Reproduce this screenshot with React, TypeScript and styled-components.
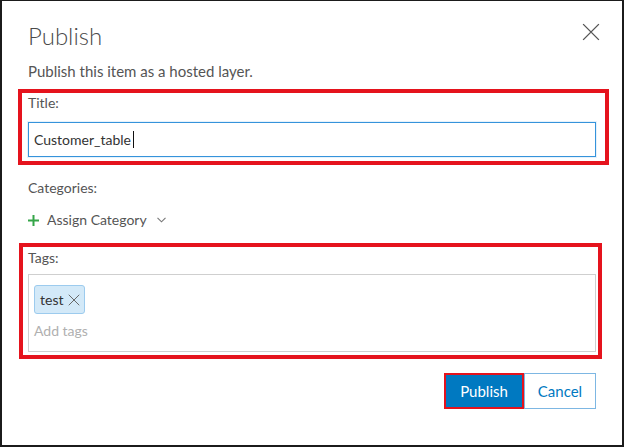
import React from 'react';
import styled, { createGlobalStyle } from 'styled-components';

const GlobalStyle = createGlobalStyle`
  html, body {
    margin: 0;
    padding: 0;
    background: #ffffff;
  }
  body {
    font-family: Lato, "Open Sans", "Liberation Sans", sans-serif;
    color: #4a4a4a;
  }
`;

// Outer frame of the screenshot
const Frame = styled.div`
  box-sizing: border-box;
  width: 624px;
  height: 447px;
  border: 2px solid #1b1b1b;
  border-top-width: 1px;
  background: #fff;
  padding: 20px 26px 0 26px;
  display: flex;
  flex-direction: column;
`;

const Header = styled.div`
  display: flex;
  align-items: flex-start;
  justify-content: space-between;
`;

const Heading = styled.h2`
  margin: 0;
  font-size: 24px;
  line-height: 30px;
  font-weight: 300;
  color: #4a4a4a;
`;

const CloseButton = styled.button`
  margin: 2px -4px 0 0;
  padding: 0;
  border: none;
  background: transparent;
  cursor: pointer;
  width: 18px;
  height: 18px;
  display: flex;
  color: #555;
`;

const Description = styled.p`
  margin: 10px 0 8px;
  font-size: 15px;
  line-height: 20px;
  color: #555;
`;

// red annotation frame drawn round a field
const Highlight = styled.div<{ $left: number; $right: number; $padLeft: number; $padRight: number; $padTop: number; $padBottom: number }>`
  border: 4px solid #e5131d;
  margin-left: ${p => -p.$left}px;
  margin-right: ${p => -p.$right}px;
  padding: ${p => p.$padTop}px ${p => p.$padRight}px ${p => p.$padBottom}px ${p => p.$padLeft}px;
`;

const Label = styled.div<{ $gap: number }>`
  font-size: 14px;
  line-height: 18px;
  color: #555;
  margin-bottom: ${p => p.$gap}px;
`;

const TextBox = styled.div`
  box-sizing: border-box;
  height: 35px;
  border: 1px solid #3593db;
  box-shadow: 0 0 0 1px rgba(53, 147, 219, 0.12);
  padding: 0 5px;
  display: flex;
  align-items: center;
  font-size: 14px;
  color: #333;
`;

const Caret = styled.span`
  display: inline-block;
  width: 1px;
  height: 17px;
  background: #111;
  margin-left: 2px;
`;

const Section = styled.div<{ $top: number }>`
  margin-top: ${p => p.$top}px;
`;

const AssignButton = styled.button`
  margin-top: 14px;
  padding: 0;
  border: none;
  background: transparent;
  font-family: inherit;
  font-size: 14px;
  line-height: 18px;
  color: #555;
  display: flex;
  align-items: center;
  gap: 8px;
  cursor: pointer;
`;

const TagBox = styled.div`
  box-sizing: border-box;
  height: 78px;
  border: 1px solid #cfcfcf;
  padding: 10px 5px 0;
  display: flex;
  flex-direction: column;
  align-items: flex-start;
`;

const Chip = styled.span`
  box-sizing: border-box;
  height: 29px;
  display: inline-flex;
  align-items: center;
  gap: 5px;
  padding: 0 4px 0 5px;
  background: #d3e9f8;
  border: 1px solid #9ccbee;
  border-radius: 3px;
  font-size: 14px;
  color: #333;
`;

const ChipRemove = styled.span`
  display: flex;
  color: #666;
`;

const Placeholder = styled.div`
  margin-top: 8px;
  font-size: 14px;
  line-height: 18px;
  color: #b0b0b0;
`;

const Actions = styled.div`
  margin-top: 14px;
  display: flex;
  justify-content: flex-end;
`;

const Marked = styled.div`
  border: 2px solid #e5131d;
  display: flex;
`;

const Button = styled.button<{ $primary?: boolean }>`
  box-sizing: border-box;
  font-family: inherit;
  font-size: 15px;
  cursor: pointer;
  padding: 0;
  ${p => p.$primary
    ? `
      width: 76px;
      height: 32px;
      background: #0079c1;
      color: #fff;
      border: none;
    `
    : `
      width: 72px;
      height: 36px;
      background: #fff;
      color: #0079c1;
      border: 1px solid #7db7e3;
    `}
`;

const XIcon = ({ size, width }: { size: number; width: number }) => (
  <svg width={size} height={size} viewBox="0 0 16 16" fill="none" stroke="currentColor" strokeWidth={width}>
    <path d="M1 1 L15 15 M15 1 L1 15" />
  </svg>
);

const App = () => {
  return (
    <>
      <GlobalStyle />
      <Frame>
        <Header>
          <Heading>Publish</Heading>
          <CloseButton aria-label="Close">
            <XIcon size={18} width={1.2} />
          </CloseButton>
        </Header>
        <Description>Publish this item as a hosted layer.</Description>

        <Highlight $left={10} $right={13} $padLeft={6} $padRight={9} $padTop={1} $padBottom={4}>
          <Label $gap={10}>Title:</Label>
          <TextBox role="textbox">
            Customer_table
            <Caret />
          </TextBox>
        </Highlight>

        <Section $top={14}>
          <Label $gap={0}>Categories:</Label>
          <AssignButton>
            <svg width="11" height="11" viewBox="0 0 11 11" stroke="#35a548" strokeWidth="2">
              <path d="M5.5 0 V11 M0 5.5 H11" />
            </svg>
            Assign Category
            <svg width="9" height="6" viewBox="0 0 9 6" fill="none" stroke="#777" strokeWidth="1.1" style={{ marginLeft: 2 }}>
              <path d="M0.5 0.8 L4.5 4.8 L8.5 0.8" />
            </svg>
          </AssignButton>
        </Section>

        <Section $top={14}>
          <Highlight $left={9} $right={6} $padLeft={5} $padRight={2} $padTop={2} $padBottom={3}>
            <Label $gap={7}>Tags:</Label>
            <TagBox>
              <Chip>
                test
                <ChipRemove>
                  <XIcon size={12} width={1.3} />
                </ChipRemove>
              </Chip>
              <Placeholder>Add tags</Placeholder>
            </TagBox>
          </Highlight>
        </Section>

        <Actions>
          <Marked>
            <Button $primary>Publish</Button>
          </Marked>
          <Button>Cancel</Button>
        </Actions>
      </Frame>
    </>
  );
};

export default App;
